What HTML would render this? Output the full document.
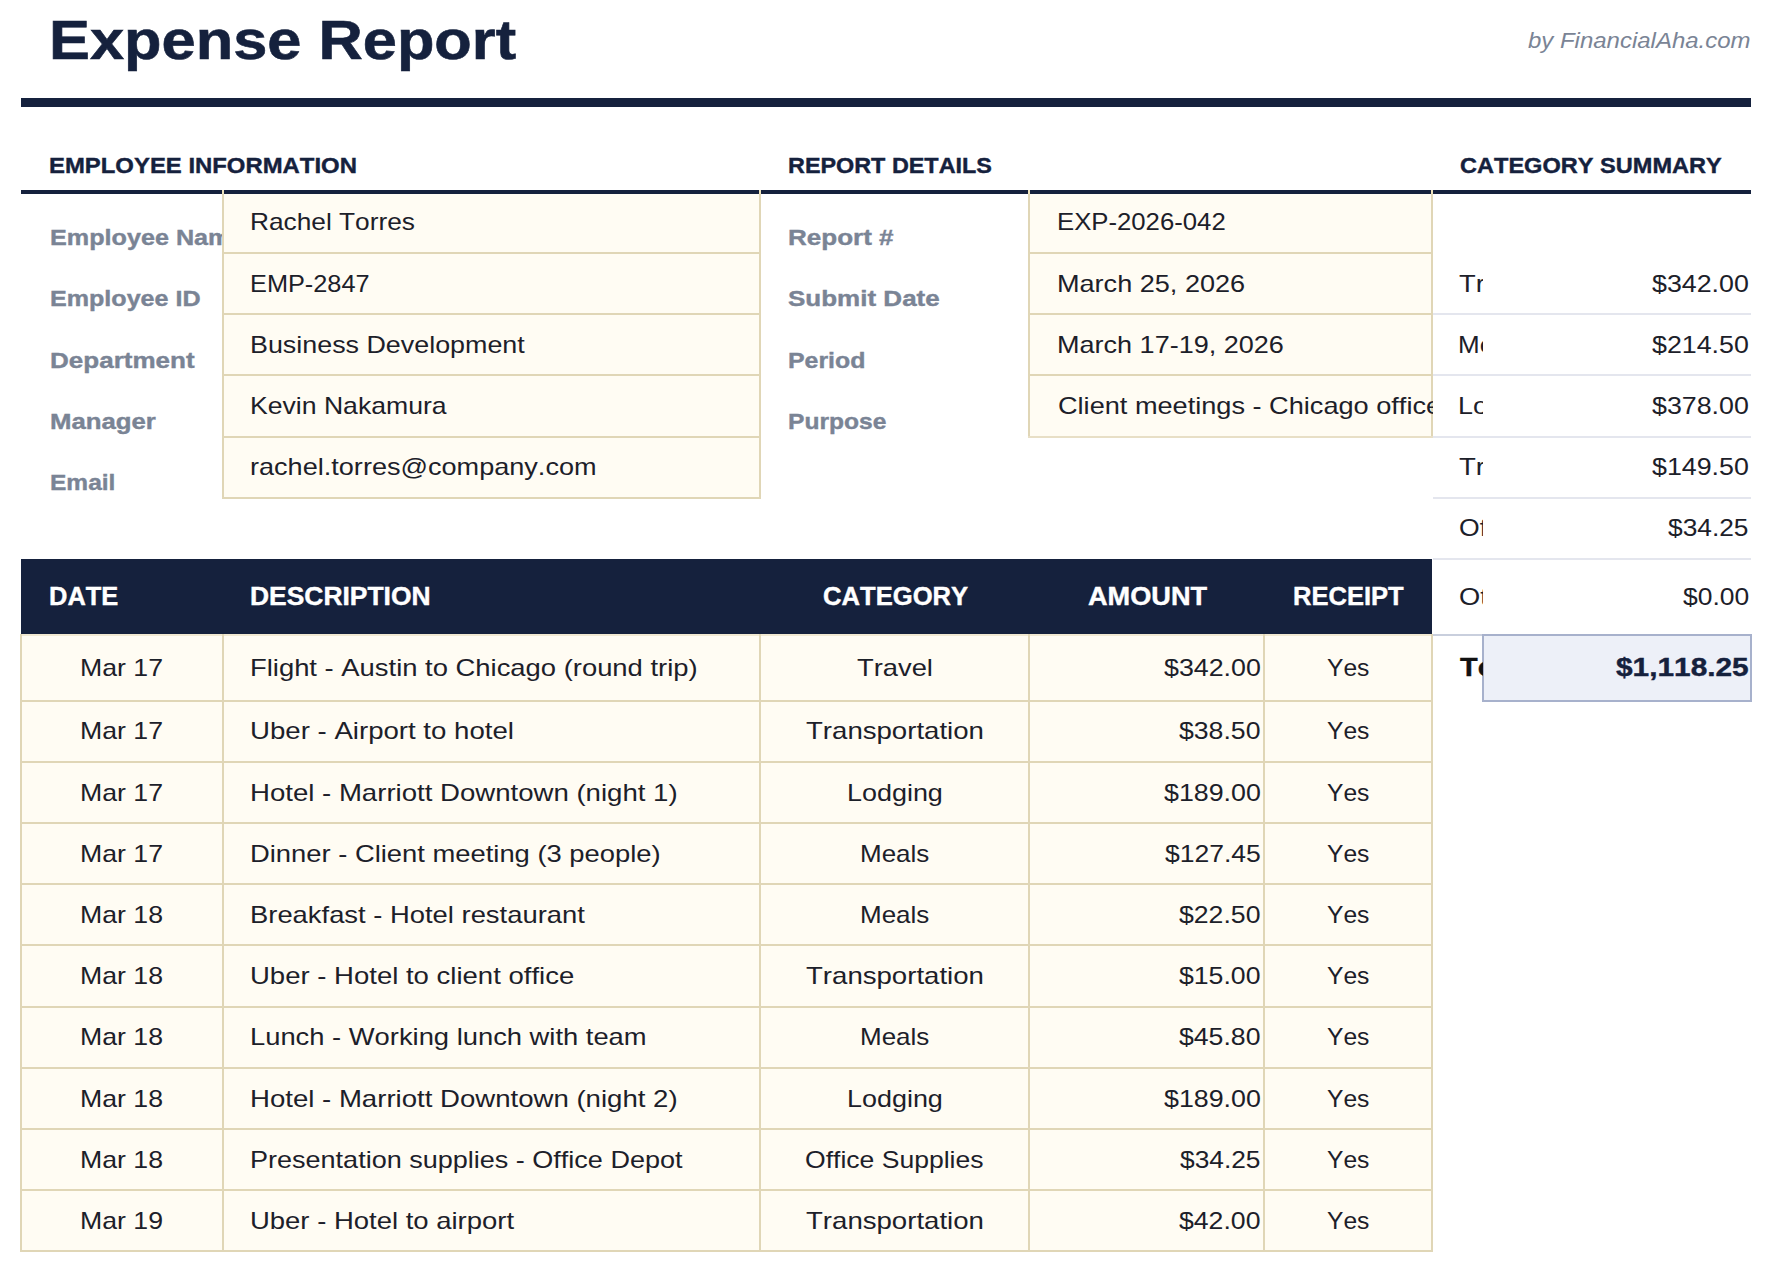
<!DOCTYPE html>
<html><head><meta charset="utf-8"><title>Expense Report</title>
<style>
html,body{margin:0;padding:0;background:#ffffff;}
body{width:1772px;height:1272px;position:relative;overflow:hidden;font-family:"Liberation Sans",sans-serif;font-kerning:none;}
.r{position:absolute;}
.t{position:absolute;white-space:nowrap;transform-origin:0 0;}
.c{position:absolute;overflow:hidden;}
</style></head><body>
<div class="t" id="t0" style="left:49.00px;top:12.00px;font-size:56px;line-height:56px;font-weight:700;font-style:normal;color:#15213d;-webkit-text-stroke:0.6px #15213d;transform:scaleX(1.09575);">Expense Report</div>
<div class="t" id="t1" style="left:1528.00px;top:30.00px;font-size:21.6px;line-height:21.6px;font-weight:400;font-style:italic;color:#7a8495;transform:scaleX(1.11000);">by FinancialAha.com</div>
<div class="r" style="left:21px;top:98px;width:1730px;height:9px;background:#15213d;"></div>
<div class="t" id="t2" style="left:49.40px;top:155.00px;font-size:22.57px;line-height:22.57px;font-weight:700;font-style:normal;color:#15213d;-webkit-text-stroke:0.4px #15213d;transform:scaleX(1.05882);">EMPLOYEE INFORMATION</div>
<div class="t" id="t3" style="left:788.00px;top:155.00px;font-size:22.57px;line-height:22.57px;font-weight:700;font-style:normal;color:#15213d;-webkit-text-stroke:0.4px #15213d;transform:scaleX(1.03590);">REPORT DETAILS</div>
<div class="t" id="t4" style="left:1460.00px;top:155.00px;font-size:22.57px;line-height:22.57px;font-weight:700;font-style:normal;color:#15213d;-webkit-text-stroke:0.4px #15213d;transform:scaleX(1.04400);">CATEGORY SUMMARY</div>
<div class="r" style="left:21px;top:190px;width:1730px;height:4px;background:#15213d;"></div>
<div class="r" style="left:222px;top:194px;width:539px;height:305px;background:#fffcf3;"></div>
<div class="r" style="left:222px;top:252px;width:539px;height:2px;background:#e0d6b6;"></div>
<div class="r" style="left:222px;top:313px;width:539px;height:2px;background:#e0d6b6;"></div>
<div class="r" style="left:222px;top:374px;width:539px;height:2px;background:#e0d6b6;"></div>
<div class="r" style="left:222px;top:436px;width:539px;height:2px;background:#e0d6b6;"></div>
<div class="r" style="left:222px;top:497px;width:539px;height:2px;background:#e0d6b6;"></div>
<div class="r" style="left:222px;top:194px;width:2px;height:305px;background:#e0d6b6;"></div>
<div class="r" style="left:759px;top:194px;width:2px;height:305px;background:#e0d6b6;"></div>
<div class="r" style="left:222px;top:190px;width:2px;height:4px;background:#efe3bd;"></div>
<div class="r" style="left:759px;top:190px;width:2px;height:4px;background:#efe3bd;"></div>
<div class="r" style="left:1028px;top:190px;width:2px;height:4px;background:#efe3bd;"></div>
<div class="r" style="left:1431px;top:190px;width:2px;height:4px;background:#efe3bd;"></div>
<div class="c" style="left:21px;top:200px;width:201px;height:60px"><div class="t" id="t5" style="left:28.90px;top:27.00px;font-size:22.57px;line-height:22.57px;font-weight:700;font-style:normal;color:#7a8495;-webkit-text-stroke:0.4px #7a8495;transform:scaleX(1.11561);">Employee Name</div></div>
<div class="t" id="t6" style="left:250.20px;top:210.00px;font-size:24.0px;line-height:24.0px;font-weight:400;font-style:normal;color:#1c2029;transform:scaleX(1.09459);">Rachel Torres</div>
<div class="c" style="left:21px;top:261px;width:201px;height:60px"><div class="t" id="t7" style="left:28.90px;top:27.00px;font-size:22.57px;line-height:22.57px;font-weight:700;font-style:normal;color:#7a8495;-webkit-text-stroke:0.4px #7a8495;transform:scaleX(1.11194);">Employee ID</div></div>
<div class="t" id="t8" style="left:250.18px;top:272.00px;font-size:24.0px;line-height:24.0px;font-weight:400;font-style:normal;color:#1c2029;transform:scaleX(1.05462);">EMP-2847</div>
<div class="c" style="left:21px;top:323px;width:201px;height:60px"><div class="t" id="t9" style="left:28.90px;top:27.00px;font-size:22.57px;line-height:22.57px;font-weight:700;font-style:normal;color:#7a8495;-webkit-text-stroke:0.4px #7a8495;transform:scaleX(1.15328);">Department</div></div>
<div class="t" id="t10" style="left:250.20px;top:333.00px;font-size:24.0px;line-height:24.0px;font-weight:400;font-style:normal;color:#1c2029;transform:scaleX(1.11936);">Business Development</div>
<div class="c" style="left:21px;top:384px;width:201px;height:60px"><div class="t" id="t11" style="left:28.90px;top:27.00px;font-size:22.57px;line-height:22.57px;font-weight:700;font-style:normal;color:#7a8495;-webkit-text-stroke:0.4px #7a8495;transform:scaleX(1.14130);">Manager</div></div>
<div class="t" id="t12" style="left:250.20px;top:394.00px;font-size:24.0px;line-height:24.0px;font-weight:400;font-style:normal;color:#1c2029;transform:scaleX(1.10795);">Kevin Nakamura</div>
<div class="c" style="left:21px;top:445px;width:201px;height:60px"><div class="t" id="t13" style="left:28.90px;top:27.00px;font-size:22.57px;line-height:22.57px;font-weight:700;font-style:normal;color:#7a8495;-webkit-text-stroke:0.4px #7a8495;transform:scaleX(1.08621);">Email</div></div>
<div class="t" id="t14" style="left:250.20px;top:455.00px;font-size:24.0px;line-height:24.0px;font-weight:400;font-style:normal;color:#1c2029;transform:scaleX(1.12829);">rachel.torres@company.com</div>
<div class="r" style="left:1028px;top:194px;width:405px;height:243px;background:#fffcf3;"></div>
<div class="r" style="left:1028px;top:252px;width:405px;height:2px;background:#e0d6b6;"></div>
<div class="r" style="left:1028px;top:313px;width:405px;height:2px;background:#e0d6b6;"></div>
<div class="r" style="left:1028px;top:374px;width:405px;height:2px;background:#e0d6b6;"></div>
<div class="r" style="left:1028px;top:436px;width:405px;height:2px;background:#e8dfc6;"></div>
<div class="r" style="left:1028px;top:194px;width:2px;height:242px;background:#e0d6b6;"></div>
<div class="r" style="left:1431px;top:194px;width:2px;height:242px;background:#e0d6b6;"></div>
<div class="c" style="left:761px;top:200px;width:267px;height:60px"><div class="t" id="t15" style="left:27.00px;top:27.00px;font-size:22.57px;line-height:22.57px;font-weight:700;font-style:normal;color:#7a8495;-webkit-text-stroke:0.4px #7a8495;transform:scaleX(1.15385);">Report #</div></div>
<div class="c" style="left:1030px;top:185px;width:403px;height:60px"><div class="t" id="t16" style="left:26.50px;top:25.00px;font-size:24.0px;line-height:24.0px;font-weight:400;font-style:normal;color:#1c2029;transform:scaleX(1.07147);">EXP-2026-042</div></div>
<div class="c" style="left:761px;top:261px;width:267px;height:60px"><div class="t" id="t17" style="left:27.00px;top:27.00px;font-size:22.57px;line-height:22.57px;font-weight:700;font-style:normal;color:#7a8495;-webkit-text-stroke:0.4px #7a8495;transform:scaleX(1.15272);">Submit Date</div></div>
<div class="c" style="left:1030px;top:247px;width:403px;height:60px"><div class="t" id="t18" style="left:26.50px;top:25.00px;font-size:24.0px;line-height:24.0px;font-weight:400;font-style:normal;color:#1c2029;transform:scaleX(1.12805);">March 25, 2026</div></div>
<div class="c" style="left:761px;top:323px;width:267px;height:60px"><div class="t" id="t19" style="left:27.00px;top:27.00px;font-size:22.57px;line-height:22.57px;font-weight:700;font-style:normal;color:#7a8495;-webkit-text-stroke:0.4px #7a8495;transform:scaleX(1.10294);">Period</div></div>
<div class="c" style="left:1030px;top:308px;width:403px;height:60px"><div class="t" id="t20" style="left:26.50px;top:25.00px;font-size:24.0px;line-height:24.0px;font-weight:400;font-style:normal;color:#1c2029;transform:scaleX(1.12629);">March 17-19, 2026</div></div>
<div class="c" style="left:761px;top:384px;width:267px;height:60px"><div class="t" id="t21" style="left:27.00px;top:27.00px;font-size:22.57px;line-height:22.57px;font-weight:700;font-style:normal;color:#7a8495;-webkit-text-stroke:0.4px #7a8495;transform:scaleX(1.08989);">Purpose</div></div>
<div class="c" style="left:1030px;top:369px;width:403px;height:60px"><div class="t" id="t22" style="left:27.50px;top:25.00px;font-size:24.0px;line-height:24.0px;font-weight:400;font-style:normal;color:#1c2029;transform:scaleX(1.13056);">Client meetings - Chicago office</div></div>
<div class="r" style="left:1433px;top:313px;width:318px;height:2px;background:#e4e6ee;"></div>
<div class="r" style="left:1433px;top:374px;width:318px;height:2px;background:#e4e6ee;"></div>
<div class="r" style="left:1433px;top:436px;width:318px;height:2px;background:#e4e6ee;"></div>
<div class="r" style="left:1433px;top:497px;width:318px;height:2px;background:#e4e6ee;"></div>
<div class="r" style="left:1433px;top:558px;width:318px;height:2px;background:#e4e6ee;"></div>
<div class="r" style="left:1433px;top:634px;width:318px;height:2px;background:#c9cfdd;"></div>
<div class="c" style="left:1433px;top:247px;width:50px;height:60px"><div class="t" id="t23" style="left:26.00px;top:25.00px;font-size:24.0px;line-height:24.0px;font-weight:400;font-style:normal;color:#1c2029;transform:scaleX(1.13868);">Travel</div></div>
<div class="t" id="t24" style="left:1651.75px;top:272.00px;font-size:24.0px;line-height:24.0px;font-weight:400;font-style:normal;color:#1c2029;transform:scaleX(1.11628);">$342.00</div>
<div class="c" style="left:1433px;top:308px;width:50px;height:60px"><div class="t" id="t25" style="left:25.00px;top:25.00px;font-size:24.0px;line-height:24.0px;font-weight:400;font-style:normal;color:#1c2029;transform:scaleX(1.08197);">Meals</div></div>
<div class="t" id="t26" style="left:1651.75px;top:333.00px;font-size:24.0px;line-height:24.0px;font-weight:400;font-style:normal;color:#1c2029;transform:scaleX(1.11628);">$214.50</div>
<div class="c" style="left:1433px;top:369px;width:50px;height:60px"><div class="t" id="t27" style="left:25.00px;top:25.00px;font-size:24.0px;line-height:24.0px;font-weight:400;font-style:normal;color:#1c2029;transform:scaleX(1.12195);">Lodging</div></div>
<div class="t" id="t28" style="left:1651.75px;top:394.00px;font-size:24.0px;line-height:24.0px;font-weight:400;font-style:normal;color:#1c2029;transform:scaleX(1.11628);">$378.00</div>
<div class="c" style="left:1433px;top:430px;width:50px;height:60px"><div class="t" id="t29" style="left:26.00px;top:25.00px;font-size:24.0px;line-height:24.0px;font-weight:400;font-style:normal;color:#1c2029;transform:scaleX(1.14950);">Transportation</div></div>
<div class="t" id="t30" style="left:1651.75px;top:455.00px;font-size:24.0px;line-height:24.0px;font-weight:400;font-style:normal;color:#1c2029;transform:scaleX(1.11628);">$149.50</div>
<div class="c" style="left:1433px;top:491px;width:50px;height:60px"><div class="t" id="t31" style="left:26.00px;top:25.00px;font-size:24.0px;line-height:24.0px;font-weight:400;font-style:normal;color:#1c2029;transform:scaleX(1.10625);">Office Supplies</div></div>
<div class="t" id="t32" style="left:1667.75px;top:516.00px;font-size:24.0px;line-height:24.0px;font-weight:400;font-style:normal;color:#1c2029;transform:scaleX(1.09606);">$34.25</div>
<div class="c" style="left:1433px;top:560px;width:50px;height:60px"><div class="t" id="t33" style="left:26.00px;top:25.00px;font-size:24.0px;line-height:24.0px;font-weight:400;font-style:normal;color:#1c2029;transform:scaleX(1.13559);">Other</div></div>
<div class="t" id="t34" style="left:1682.75px;top:585.00px;font-size:24.0px;line-height:24.0px;font-weight:400;font-style:normal;color:#1c2029;transform:scaleX(1.10169);">$0.00</div>
<div class="r" style="left:1482px;top:634px;width:270px;height:68px;background:#a7b1cc;"></div>
<div class="r" style="left:1484px;top:636px;width:266px;height:64px;background:#edf0f8;"></div>
<div class="c" style="left:1433px;top:631px;width:50px;height:60px"><div class="t" id="t35" style="left:27.00px;top:24.00px;font-size:25.08px;line-height:25.08px;font-weight:700;font-style:normal;color:#111111;-webkit-text-stroke:0.4px #111111;transform:scaleX(1.15280);">Total</div></div>
<div class="t" id="t36" style="left:1615.75px;top:655.00px;font-size:25.08px;line-height:25.08px;font-weight:700;font-style:normal;color:#15213d;-webkit-text-stroke:0.4px #15213d;transform:scaleX(1.18919);">$1,118.25</div>
<div class="r" style="left:21px;top:559px;width:1411px;height:75px;background:#15213d;"></div>
<div class="t" id="t37" style="left:49.00px;top:584.00px;font-size:25.08px;line-height:25.08px;font-weight:700;font-style:normal;color:#ffffff;-webkit-text-stroke:0.4px #ffffff;transform:scaleX(1.01493);">DATE</div>
<div class="t" id="t38" style="left:250.00px;top:584.00px;font-size:25.08px;line-height:25.08px;font-weight:700;font-style:normal;color:#ffffff;-webkit-text-stroke:0.4px #ffffff;transform:scaleX(1.05325);">DESCRIPTION</div>
<div class="t" id="t39" style="left:822.50px;top:584.00px;font-size:25.08px;line-height:25.08px;font-weight:700;font-style:normal;color:#ffffff;-webkit-text-stroke:0.4px #ffffff;transform:scaleX(1.02128);">CATEGORY</div>
<div class="t" id="t40" style="left:1087.50px;top:584.00px;font-size:25.08px;line-height:25.08px;font-weight:700;font-style:normal;color:#ffffff;-webkit-text-stroke:0.4px #ffffff;transform:scaleX(1.08182);">AMOUNT</div>
<div class="t" id="t41" style="left:1293.00px;top:584.00px;font-size:25.08px;line-height:25.08px;font-weight:700;font-style:normal;color:#ffffff;-webkit-text-stroke:0.4px #ffffff;transform:scaleX(1.01852);">RECEIPT</div>
<div class="r" style="left:20px;top:634px;width:1413px;height:618px;background:#fffcf3;"></div>
<div class="r" style="left:20px;top:634px;width:1413px;height:2px;background:#f1e9d2;"></div>
<div class="r" style="left:20px;top:700px;width:1413px;height:2px;background:#e0d6b6;"></div>
<div class="r" style="left:20px;top:761px;width:1413px;height:2px;background:#e0d6b6;"></div>
<div class="r" style="left:20px;top:822px;width:1413px;height:2px;background:#e0d6b6;"></div>
<div class="r" style="left:20px;top:883px;width:1413px;height:2px;background:#e0d6b6;"></div>
<div class="r" style="left:20px;top:944px;width:1413px;height:2px;background:#e0d6b6;"></div>
<div class="r" style="left:20px;top:1006px;width:1413px;height:2px;background:#e0d6b6;"></div>
<div class="r" style="left:20px;top:1067px;width:1413px;height:2px;background:#e0d6b6;"></div>
<div class="r" style="left:20px;top:1128px;width:1413px;height:2px;background:#e0d6b6;"></div>
<div class="r" style="left:20px;top:1189px;width:1413px;height:2px;background:#e0d6b6;"></div>
<div class="r" style="left:20px;top:1250px;width:1413px;height:2px;background:#e0d6b6;"></div>
<div class="r" style="left:20px;top:634px;width:2px;height:618px;background:#e0d6b6;"></div>
<div class="r" style="left:222px;top:634px;width:2px;height:618px;background:#e0d6b6;"></div>
<div class="r" style="left:759px;top:634px;width:2px;height:618px;background:#e0d6b6;"></div>
<div class="r" style="left:1028px;top:634px;width:2px;height:618px;background:#e0d6b6;"></div>
<div class="r" style="left:1263px;top:634px;width:2px;height:618px;background:#e0d6b6;"></div>
<div class="r" style="left:1431px;top:634px;width:2px;height:618px;background:#e0d6b6;"></div>
<div class="t" id="t42" style="left:79.60px;top:656.00px;font-size:24.0px;line-height:24.0px;font-weight:400;font-style:normal;color:#1c2029;transform:scaleX(1.11111);">Mar 17</div>
<div class="t" id="t43" style="left:250.10px;top:656.00px;font-size:24.0px;line-height:24.0px;font-weight:400;font-style:normal;color:#1c2029;transform:scaleX(1.14139);">Flight - Austin to Chicago (round trip)</div>
<div class="t" id="t44" style="left:857.00px;top:656.00px;font-size:24.0px;line-height:24.0px;font-weight:400;font-style:normal;color:#1c2029;transform:scaleX(1.13868);">Travel</div>
<div class="t" id="t45" style="left:1164.25px;top:656.00px;font-size:24.0px;line-height:24.0px;font-weight:400;font-style:normal;color:#1c2029;transform:scaleX(1.11628);">$342.00</div>
<div class="t" id="t46" style="left:1326.50px;top:656.00px;font-size:24.0px;line-height:24.0px;font-weight:400;font-style:normal;color:#1c2029;transform:scaleX(1.02500);">Yes</div>
<div class="t" id="t47" style="left:79.60px;top:719.00px;font-size:24.0px;line-height:24.0px;font-weight:400;font-style:normal;color:#1c2029;transform:scaleX(1.11111);">Mar 17</div>
<div class="t" id="t48" style="left:250.10px;top:719.00px;font-size:24.0px;line-height:24.0px;font-weight:400;font-style:normal;color:#1c2029;transform:scaleX(1.15044);">Uber - Airport to hotel</div>
<div class="t" id="t49" style="left:806.00px;top:719.00px;font-size:24.0px;line-height:24.0px;font-weight:400;font-style:normal;color:#1c2029;transform:scaleX(1.14950);">Transportation</div>
<div class="t" id="t50" style="left:1179.25px;top:719.00px;font-size:24.0px;line-height:24.0px;font-weight:400;font-style:normal;color:#1c2029;transform:scaleX(1.10959);">$38.50</div>
<div class="t" id="t51" style="left:1326.50px;top:719.00px;font-size:24.0px;line-height:24.0px;font-weight:400;font-style:normal;color:#1c2029;transform:scaleX(1.02500);">Yes</div>
<div class="t" id="t52" style="left:79.60px;top:781.00px;font-size:24.0px;line-height:24.0px;font-weight:400;font-style:normal;color:#1c2029;transform:scaleX(1.11111);">Mar 17</div>
<div class="t" id="t53" style="left:250.10px;top:781.00px;font-size:24.0px;line-height:24.0px;font-weight:400;font-style:normal;color:#1c2029;transform:scaleX(1.14905);">Hotel - Marriott Downtown (night 1)</div>
<div class="t" id="t54" style="left:846.50px;top:781.00px;font-size:24.0px;line-height:24.0px;font-weight:400;font-style:normal;color:#1c2029;transform:scaleX(1.12195);">Lodging</div>
<div class="t" id="t55" style="left:1164.25px;top:781.00px;font-size:24.0px;line-height:24.0px;font-weight:400;font-style:normal;color:#1c2029;transform:scaleX(1.11628);">$189.00</div>
<div class="t" id="t56" style="left:1326.50px;top:781.00px;font-size:24.0px;line-height:24.0px;font-weight:400;font-style:normal;color:#1c2029;transform:scaleX(1.02500);">Yes</div>
<div class="t" id="t57" style="left:79.60px;top:842.00px;font-size:24.0px;line-height:24.0px;font-weight:400;font-style:normal;color:#1c2029;transform:scaleX(1.11111);">Mar 17</div>
<div class="t" id="t58" style="left:250.10px;top:842.00px;font-size:24.0px;line-height:24.0px;font-weight:400;font-style:normal;color:#1c2029;transform:scaleX(1.14006);">Dinner - Client meeting (3 people)</div>
<div class="t" id="t59" style="left:859.50px;top:842.00px;font-size:24.0px;line-height:24.0px;font-weight:400;font-style:normal;color:#1c2029;transform:scaleX(1.08197);">Meals</div>
<div class="t" id="t60" style="left:1165.25px;top:842.00px;font-size:24.0px;line-height:24.0px;font-weight:400;font-style:normal;color:#1c2029;transform:scaleX(1.10465);">$127.45</div>
<div class="t" id="t61" style="left:1326.50px;top:842.00px;font-size:24.0px;line-height:24.0px;font-weight:400;font-style:normal;color:#1c2029;transform:scaleX(1.02500);">Yes</div>
<div class="t" id="t62" style="left:79.60px;top:903.00px;font-size:24.0px;line-height:24.0px;font-weight:400;font-style:normal;color:#1c2029;transform:scaleX(1.11111);">Mar 18</div>
<div class="t" id="t63" style="left:250.10px;top:903.00px;font-size:24.0px;line-height:24.0px;font-weight:400;font-style:normal;color:#1c2029;transform:scaleX(1.14090);">Breakfast - Hotel restaurant</div>
<div class="t" id="t64" style="left:859.50px;top:903.00px;font-size:24.0px;line-height:24.0px;font-weight:400;font-style:normal;color:#1c2029;transform:scaleX(1.08197);">Meals</div>
<div class="t" id="t65" style="left:1179.25px;top:903.00px;font-size:24.0px;line-height:24.0px;font-weight:400;font-style:normal;color:#1c2029;transform:scaleX(1.10959);">$22.50</div>
<div class="t" id="t66" style="left:1326.50px;top:903.00px;font-size:24.0px;line-height:24.0px;font-weight:400;font-style:normal;color:#1c2029;transform:scaleX(1.02500);">Yes</div>
<div class="t" id="t67" style="left:79.60px;top:964.00px;font-size:24.0px;line-height:24.0px;font-weight:400;font-style:normal;color:#1c2029;transform:scaleX(1.11111);">Mar 18</div>
<div class="t" id="t68" style="left:250.10px;top:964.00px;font-size:24.0px;line-height:24.0px;font-weight:400;font-style:normal;color:#1c2029;transform:scaleX(1.14643);">Uber - Hotel to client office</div>
<div class="t" id="t69" style="left:806.00px;top:964.00px;font-size:24.0px;line-height:24.0px;font-weight:400;font-style:normal;color:#1c2029;transform:scaleX(1.14950);">Transportation</div>
<div class="t" id="t70" style="left:1179.25px;top:964.00px;font-size:24.0px;line-height:24.0px;font-weight:400;font-style:normal;color:#1c2029;transform:scaleX(1.10959);">$15.00</div>
<div class="t" id="t71" style="left:1326.50px;top:964.00px;font-size:24.0px;line-height:24.0px;font-weight:400;font-style:normal;color:#1c2029;transform:scaleX(1.02500);">Yes</div>
<div class="t" id="t72" style="left:79.60px;top:1025.00px;font-size:24.0px;line-height:24.0px;font-weight:400;font-style:normal;color:#1c2029;transform:scaleX(1.11111);">Mar 18</div>
<div class="t" id="t73" style="left:250.10px;top:1025.00px;font-size:24.0px;line-height:24.0px;font-weight:400;font-style:normal;color:#1c2029;transform:scaleX(1.13913);">Lunch - Working lunch with team</div>
<div class="t" id="t74" style="left:859.50px;top:1025.00px;font-size:24.0px;line-height:24.0px;font-weight:400;font-style:normal;color:#1c2029;transform:scaleX(1.08197);">Meals</div>
<div class="t" id="t75" style="left:1179.25px;top:1025.00px;font-size:24.0px;line-height:24.0px;font-weight:400;font-style:normal;color:#1c2029;transform:scaleX(1.10959);">$45.80</div>
<div class="t" id="t76" style="left:1326.50px;top:1025.00px;font-size:24.0px;line-height:24.0px;font-weight:400;font-style:normal;color:#1c2029;transform:scaleX(1.02500);">Yes</div>
<div class="t" id="t77" style="left:79.60px;top:1087.00px;font-size:24.0px;line-height:24.0px;font-weight:400;font-style:normal;color:#1c2029;transform:scaleX(1.11111);">Mar 18</div>
<div class="t" id="t78" style="left:250.10px;top:1087.00px;font-size:24.0px;line-height:24.0px;font-weight:400;font-style:normal;color:#1c2029;transform:scaleX(1.14905);">Hotel - Marriott Downtown (night 2)</div>
<div class="t" id="t79" style="left:846.50px;top:1087.00px;font-size:24.0px;line-height:24.0px;font-weight:400;font-style:normal;color:#1c2029;transform:scaleX(1.12195);">Lodging</div>
<div class="t" id="t80" style="left:1164.25px;top:1087.00px;font-size:24.0px;line-height:24.0px;font-weight:400;font-style:normal;color:#1c2029;transform:scaleX(1.11628);">$189.00</div>
<div class="t" id="t81" style="left:1326.50px;top:1087.00px;font-size:24.0px;line-height:24.0px;font-weight:400;font-style:normal;color:#1c2029;transform:scaleX(1.02500);">Yes</div>
<div class="t" id="t82" style="left:79.60px;top:1148.00px;font-size:24.0px;line-height:24.0px;font-weight:400;font-style:normal;color:#1c2029;transform:scaleX(1.11111);">Mar 18</div>
<div class="t" id="t83" style="left:250.10px;top:1148.00px;font-size:24.0px;line-height:24.0px;font-weight:400;font-style:normal;color:#1c2029;transform:scaleX(1.12565);">Presentation supplies - Office Depot</div>
<div class="t" id="t84" style="left:805.00px;top:1148.00px;font-size:24.0px;line-height:24.0px;font-weight:400;font-style:normal;color:#1c2029;transform:scaleX(1.10625);">Office Supplies</div>
<div class="t" id="t85" style="left:1180.25px;top:1148.00px;font-size:24.0px;line-height:24.0px;font-weight:400;font-style:normal;color:#1c2029;transform:scaleX(1.09606);">$34.25</div>
<div class="t" id="t86" style="left:1326.50px;top:1148.00px;font-size:24.0px;line-height:24.0px;font-weight:400;font-style:normal;color:#1c2029;transform:scaleX(1.02500);">Yes</div>
<div class="t" id="t87" style="left:79.60px;top:1209.00px;font-size:24.0px;line-height:24.0px;font-weight:400;font-style:normal;color:#1c2029;transform:scaleX(1.11111);">Mar 19</div>
<div class="t" id="t88" style="left:250.10px;top:1209.00px;font-size:24.0px;line-height:24.0px;font-weight:400;font-style:normal;color:#1c2029;transform:scaleX(1.14410);">Uber - Hotel to airport</div>
<div class="t" id="t89" style="left:806.00px;top:1209.00px;font-size:24.0px;line-height:24.0px;font-weight:400;font-style:normal;color:#1c2029;transform:scaleX(1.14950);">Transportation</div>
<div class="t" id="t90" style="left:1179.25px;top:1209.00px;font-size:24.0px;line-height:24.0px;font-weight:400;font-style:normal;color:#1c2029;transform:scaleX(1.10959);">$42.00</div>
<div class="t" id="t91" style="left:1326.50px;top:1209.00px;font-size:24.0px;line-height:24.0px;font-weight:400;font-style:normal;color:#1c2029;transform:scaleX(1.02500);">Yes</div>
</body></html>
